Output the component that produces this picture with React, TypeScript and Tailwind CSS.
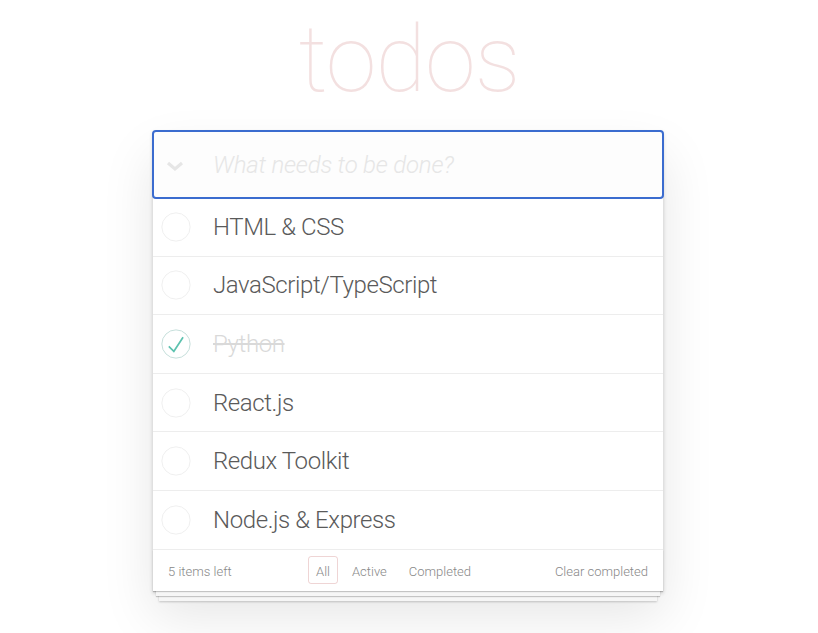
const todos = [
  { title: "HTML & CSS", done: false },
  { title: "JavaScript/TypeScript", done: false },
  { title: "Python", done: true },
  { title: "React.js", done: false },
  { title: "Redux Toolkit", done: false },
  { title: "Node.js & Express", done: false },
];

function Circle({ done }: { done: boolean }) {
  return (
    <svg width="30" height="30" viewBox="-2 -2 104 104" aria-hidden>
      <circle
        cx="50"
        cy="50"
        r="49"
        fill="none"
        stroke={done ? "#bddad5" : "#ededed"}
        strokeWidth="3"
      />
      {done && <path fill="#5dc2af" d="M72 25L42 71 27 56l-4 4 20 20 34-52z" />}
    </svg>
  );
}

export default function App() {
  const left = todos.filter((t) => !t.done).length;
  return (
    <div className="min-h-screen bg-white font-['Roboto',sans-serif] text-[#4d4d4d]">
      <h1 className="pt-[4px] text-center text-[92px] font-thin leading-[112px] tracking-[-0.01em] text-[rgba(175,47,47,0.15)]">
        todos
      </h1>
      <section className="ml-[calc(50%-256px)] mt-[15px] w-[510px] bg-white shadow-[0_2px_4px_0_rgba(0,0,0,0.2),0_25px_50px_0_rgba(0,0,0,0.1)]">
        <div className="relative flex h-[67px] items-center rounded-[3px] bg-[#fdfdfd] outline-2 outline-solid -outline-offset-1 outline-[#3b6ccf]">
          <svg
            className="absolute left-[13px] top-[30px]"
            width="18"
            height="11"
            viewBox="0 0 18 11"
            aria-hidden
          >
            <path d="M2 2l7 6 7-6" fill="none" stroke="#e6e6e6" strokeWidth="3.2" />
          </svg>
          <span className="pl-[60px] text-[24px] font-light italic tracking-[-0.2px] text-[#e6e6e6]">
            What needs to be done?
          </span>
        </div>
        <ul>
          {todos.map((t) => (
            <li
              key={t.title}
              className="flex h-[58.6px] items-center border-b border-[#ededed]"
            >
              <span className="ml-[8px] flex w-[30px] shrink-0">
                <Circle done={t.done} />
              </span>
              <span
                className={`ml-[22px] text-[24px] font-light tracking-[-0.4px] ${
                  t.done ? "text-[#d9d9d9] line-through" : "text-[#5a5a5a]"
                }`}
              >
                {t.title}
              </span>
            </li>
          ))}
        </ul>
        <footer className="relative flex h-[41px] items-center px-[15px] pt-[3px] text-[13px] font-light text-[#888] shadow-[0_1px_1px_rgba(0,0,0,0.2),0_8px_0_-3px_#f6f6f6,0_9px_1px_-3px_rgba(0,0,0,0.2),0_16px_0_-6px_#f6f6f6,0_17px_2px_-6px_rgba(0,0,0,0.2)]">
          <span>{left} items left</span>
          <div className="absolute left-[155px] top-[6px] flex items-center gap-[6px]">
            <span className="rounded-[3px] border border-[rgba(175,47,47,0.2)] px-[7px] pb-[3px] pt-[6px] leading-[17px]">
              All
            </span>
            <span className="border border-transparent px-[7px] pb-[3px] pt-[6px] leading-[17px]">Active</span>
            <span className="border border-transparent px-[7px] pb-[3px] pt-[6px] leading-[17px]">Completed</span>
          </div>
          <span className="ml-auto">Clear completed</span>
        </footer>
      </section>
    </div>
  );
}
